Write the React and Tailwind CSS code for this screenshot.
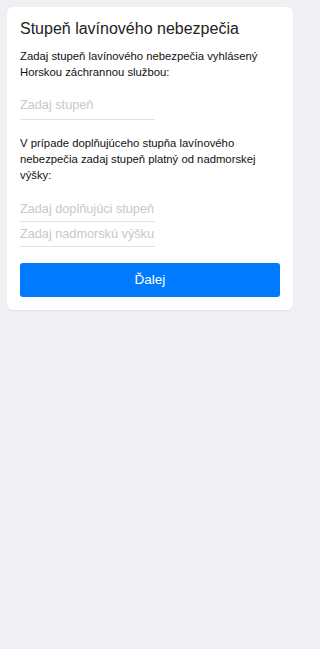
const inputCls =
  'block w-full border-b border-[#e2e2e6] text-[12.7px] leading-[20px] outline-none placeholder:text-[#c7c7cc]'

export default function App() {
  return (
    <div className="min-h-screen bg-[#efeff4] font-['Liberation_Sans',Arial,sans-serif]">
      <div className="w-[300px] p-[7px]">
        <div className="rounded-md bg-white px-[13px] pt-[11px] pb-[13px] shadow-[0_1px_2px_rgba(0,0,0,0.06)]">
          <h1 className="text-[16px] leading-[22px] text-[#222]">Stupeň lavínového nebezpečia</h1>
          <p className="mt-[8px] text-[11.3px] leading-[16px] text-[#111]">
            Zadaj stupeň lavínového nebezpečia vyhlásený Horskou záchrannou službou:
          </p>

          <div className="mt-[15px] w-[135px]">
            <input placeholder="Zadaj stupeň" className={`${inputCls} pb-[4px]`} />
          </div>

          <p className="mt-[15px] text-[11.3px] leading-[16px] text-[#111]">
            V prípade doplňujúceho stupňa lavínového nebezpečia zadaj stupeň platný od nadmorskej výšky:
          </p>

          <div className="mt-[16px] flex w-[135px] flex-col gap-[2px]">
            <input placeholder="Zadaj doplňujúci stupeň" className={`${inputCls} pb-[2px]`} />
            <input placeholder="Zadaj nadmorskú výšku" className={`${inputCls} pb-[2px]`} />
          </div>

          <button className="mt-[16px] h-[34px] w-full rounded-[3px] bg-[#007aff] text-[13.5px] text-white">
            Ďalej
          </button>
        </div>
      </div>
    </div>
  )
}
